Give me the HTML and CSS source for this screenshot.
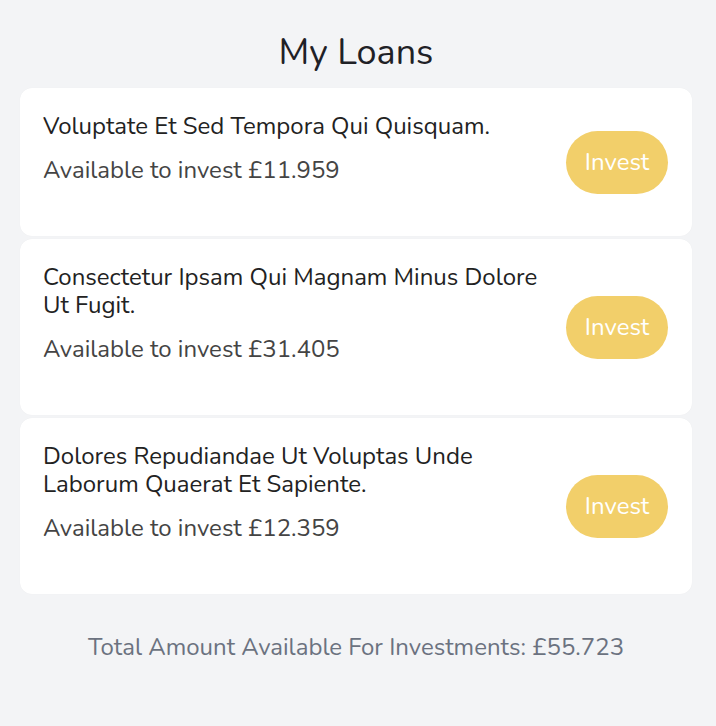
FILE: index.html
```html
<!DOCTYPE html>
<html lang="en">
<head>
<meta charset="utf-8">
<title>My Loans</title>
<link rel="stylesheet" href="styles.css">
</head>
<body>
<main class="page">
  <h1 class="page-title">My Loans</h1>
  <ul class="loan-list">
    <li class="loan-card">
      <div class="loan-info">
        <p class="loan-title">Voluptate Et Sed Tempora Qui Quisquam.</p>
        <p class="loan-available">Available to invest £11.959</p>
      </div>
      <button class="invest-btn" type="button">Invest</button>
    </li>
    <li class="loan-card">
      <div class="loan-info">
        <p class="loan-title">Consectetur Ipsam Qui Magnam Minus Dolore Ut Fugit.</p>
        <p class="loan-available">Available to invest £31.405</p>
      </div>
      <button class="invest-btn" type="button">Invest</button>
    </li>
    <li class="loan-card">
      <div class="loan-info">
        <p class="loan-title">Dolores Repudiandae Ut Voluptas Unde Laborum Quaerat Et Sapiente.</p>
        <p class="loan-available">Available to invest £12.359</p>
      </div>
      <button class="invest-btn" type="button">Invest</button>
    </li>
  </ul>
  <p class="total">Total Amount Available For Investments: £55.723</p>
</main>
</body>
</html>
```

FILE: styles.css
```css
html, body {
  margin: 0;
  padding: 0;
  background: #f3f4f6;
}

body {
  font-family: "Nunito", "Lato", "Noto Sans", sans-serif;
  color: #222;
  min-height: 726px;
}

.page {
  padding: 33px 24px 40px 20px;
}

.page-title {
  margin: 0 0 15px;
  text-align: center;
  font-size: 36px;
  line-height: 40px;
  font-weight: 400;
  color: #1f2126;
}

.loan-list {
  list-style: none;
  margin: 0;
  padding: 0;
  display: flex;
  flex-direction: column;
  gap: 3px;
}

.loan-card {
  display: flex;
  align-items: center;
  gap: 20px;
  background: #fff;
  border-radius: 12px;
  padding: 24px 24px 24px 23px;
  box-shadow: 0 0 1px rgba(0, 0, 0, 0.06);
}

.loan-info {
  flex: 1;
  min-width: 0;
  padding-bottom: 28px;
}

.loan-title {
  margin: 0;
  font-size: 24px;
  line-height: 28px;
  color: #222;
}

.loan-available {
  margin: 16px 0 0;
  font-size: 24px;
  line-height: 28px;
  color: #444;
}

.invest-btn {
  flex: none;
  width: 102px;
  height: 63px;
  border: none;
  border-radius: 32px;
  background: #f2cf6a;
  color: #fff;
  font-family: inherit;
  font-size: 24px;
  padding: 0;
}

.total {
  margin: 39px 0 0;
  text-align: center;
  font-size: 24px;
  line-height: 28px;
  color: #6b7280;
}
```
